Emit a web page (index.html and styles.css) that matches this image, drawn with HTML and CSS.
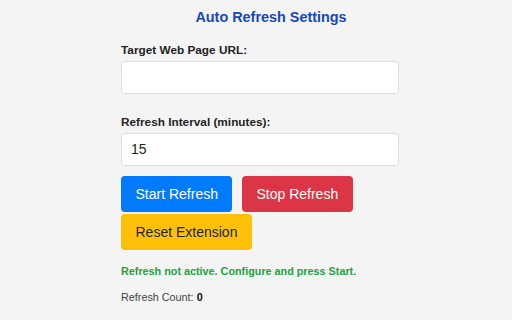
FILE: index.html
```html
<!DOCTYPE html>
<html lang="en">
<head>
  <meta charset="UTF-8">
  <title>Auto Refresh Settings</title>
  <link rel="stylesheet" href="styles.css">
</head>
<body>

  <div class="container">
    <h2 class="title">Auto Refresh Settings</h2>

    <label for="url">Target Web Page URL:</label>
    <input type="text" id="url">

    <label for="interval" class="second">Refresh Interval (minutes):</label>
    <input type="number" id="interval" value="15">

    <!-- action buttons -->
    <div class="btn-row">
      <button class="start-btn">Start Refresh</button>
      <button class="stop-btn">Stop Refresh</button>
      <button class="reset-btn">Reset Extension</button>
    </div>

    <div class="status">Refresh not active. Configure and press Start.</div>

    <div class="count">Refresh Count: <b>0</b></div>
  </div>

</body>
</html>
```

FILE: styles.css
```css
* {
  box-sizing: border-box;
  font-family: 'Liberation Sans', Arial, sans-serif;
}

body {
  margin: 0;
  padding: 0;
  background-color: #f4f4f4;
}

.container {
  width: 300px;
  margin-left: 121px;
  padding-top: 9px;
}

.title {
  margin: 0 0 16.5px;
  text-align: center;
  font-size: 14.4px;
  line-height: 17px;
  font-weight: 700;
  color: #1549b8;
}

label {
  display: block;
  font-size: 11.8px;
  line-height: 14px;
  font-weight: 700;
  color: #222;
  margin-bottom: 4px;
}

label.second {
  margin-top: 21px;
}

input {
  display: block;
  width: 278px;
  height: 33px;
  padding: 0 9px;
  border: 1px solid #dcdcdc;
  border-radius: 4px;
  background-color: #fff;
  font-size: 14px;
  color: #222;
  outline: none;
}

input[type="number"]::-webkit-inner-spin-button,
input[type="number"]::-webkit-outer-spin-button {
  -webkit-appearance: none;
  margin: 0;
}

.btn-row {
  display: flex;
  flex-wrap: wrap;
  gap: 1.5px 9.5px;
  width: 278px;
  margin-top: 10.5px;
}

button {
  padding: 10px 14.5px;
  border: none;
  border-radius: 4px;
  font-size: 14px;
  line-height: 16px;
  cursor: pointer;
}

.start-btn {
  background-color: #007bff;
  color: white;
}

.stop-btn {
  background-color: #dc3545;
  color: white;
}

.reset-btn {
  background-color: #ffc107;
  color: #212529;
}

.status {
  margin-top: 15px;
  font-size: 10.8px;
  line-height: 13px;
  font-weight: 700;
  color: #22a23c;
}

.count {
  margin-top: 13.5px;
  font-size: 10.8px;
  line-height: 13px;
  color: #444;
}

.count b {
  color: #111;
}
```
